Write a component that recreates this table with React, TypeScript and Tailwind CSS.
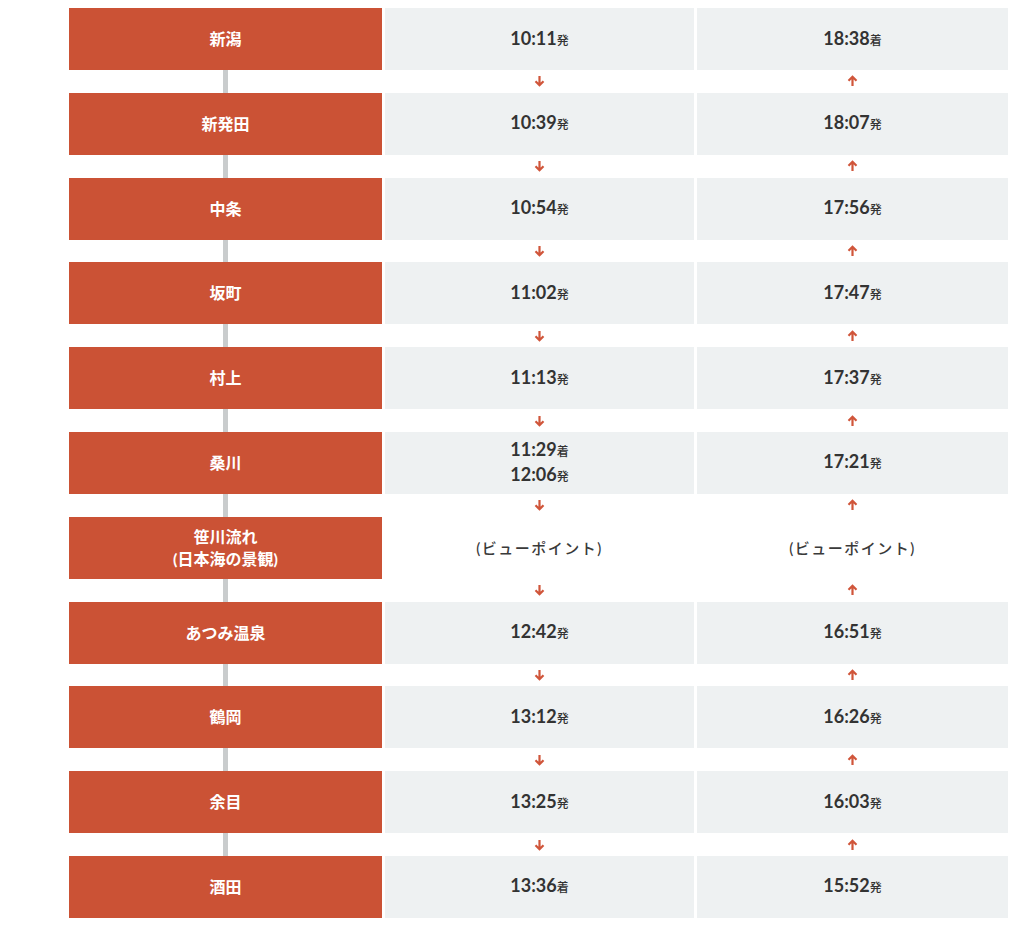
import React from 'react';

type Stop = {
  name: string[];
  down: { time: string; mark: string }[] | null;
  up: { time: string; mark: string }[] | null;
};

const stops: Stop[] = [
  { name: ['新潟'], down: [{ time: '10:11', mark: '発' }], up: [{ time: '18:38', mark: '着' }] },
  { name: ['新発田'], down: [{ time: '10:39', mark: '発' }], up: [{ time: '18:07', mark: '発' }] },
  { name: ['中条'], down: [{ time: '10:54', mark: '発' }], up: [{ time: '17:56', mark: '発' }] },
  { name: ['坂町'], down: [{ time: '11:02', mark: '発' }], up: [{ time: '17:47', mark: '発' }] },
  { name: ['村上'], down: [{ time: '11:13', mark: '発' }], up: [{ time: '17:37', mark: '発' }] },
  {
    name: ['桑川'],
    down: [{ time: '11:29', mark: '着' }, { time: '12:06', mark: '発' }],
    up: [{ time: '17:21', mark: '発' }],
  },
  { name: ['笹川流れ', '(日本海の景観)'], down: null, up: null },
  { name: ['あつみ温泉'], down: [{ time: '12:42', mark: '発' }], up: [{ time: '16:51', mark: '発' }] },
  { name: ['鶴岡'], down: [{ time: '13:12', mark: '発' }], up: [{ time: '16:26', mark: '発' }] },
  { name: ['余目'], down: [{ time: '13:25', mark: '発' }], up: [{ time: '16:03', mark: '発' }] },
  { name: ['酒田'], down: [{ time: '13:36', mark: '着' }], up: [{ time: '15:52', mark: '発' }] },
];

function Arrow({ up }: { up?: boolean }) {
  return (
    <svg width="11" height="12" viewBox="0 0 11 12" className={up ? 'rotate-180' : ''}>
      <path d="M5.5 1v9.5M1.5 6.3l4 4 4-4" stroke="#d0553a" strokeWidth="2.2" fill="none" />
    </svg>
  );
}

function TimeCell({ times }: { times: Stop['down'] }) {
  if (!times) {
    return (
      <div className="flex items-center justify-center bg-white">
        <span className="text-[15px] font-medium tracking-[0.1em] text-[#3a3a3a]">(ビューポイント)</span>
      </div>
    );
  }
  return (
    <div className="flex flex-col items-center justify-center bg-[#eef1f2]">
      {times.map((t) => (
        <div key={t.time + t.mark} className="leading-[22px] text-[#333]">
          <span className="text-[18px] font-bold">{t.time}</span>
          <span className="text-[12px] font-medium">{t.mark}</span>
        </div>
      ))}
    </div>
  );
}

export default function App() {
  return (
    <div
      className="min-h-[931px] bg-white pl-[69px] pt-[8px]"
      style={{ fontFamily: 'Lato, "Noto Sans CJK JP", sans-serif' }}
    >
      {stops.map((s, i) => (
        <div key={s.name.join('')}>
          <div className="grid h-[62px] grid-cols-[313px_309px_311px] gap-x-[3px]">
            <div className="flex flex-col items-center justify-center bg-[#cb5235] text-[16px] font-bold leading-[22px] text-white">
              {s.name.map((n) => (
                <span key={n}>{n}</span>
              ))}
            </div>
            <TimeCell times={s.down} />
            <TimeCell times={s.up} />
          </div>
          {i < stops.length - 1 && (
            <div className="grid h-[22.8px] grid-cols-[313px_309px_311px] gap-x-[3px]">
              <div className="flex justify-center">
                <div className="w-[5px] bg-[#c9cccd]" />
              </div>
              <div className="flex items-center justify-center">
                <Arrow />
              </div>
              <div className="flex items-center justify-center">
                <Arrow up />
              </div>
            </div>
          )}
        </div>
      ))}
    </div>
  );
}
